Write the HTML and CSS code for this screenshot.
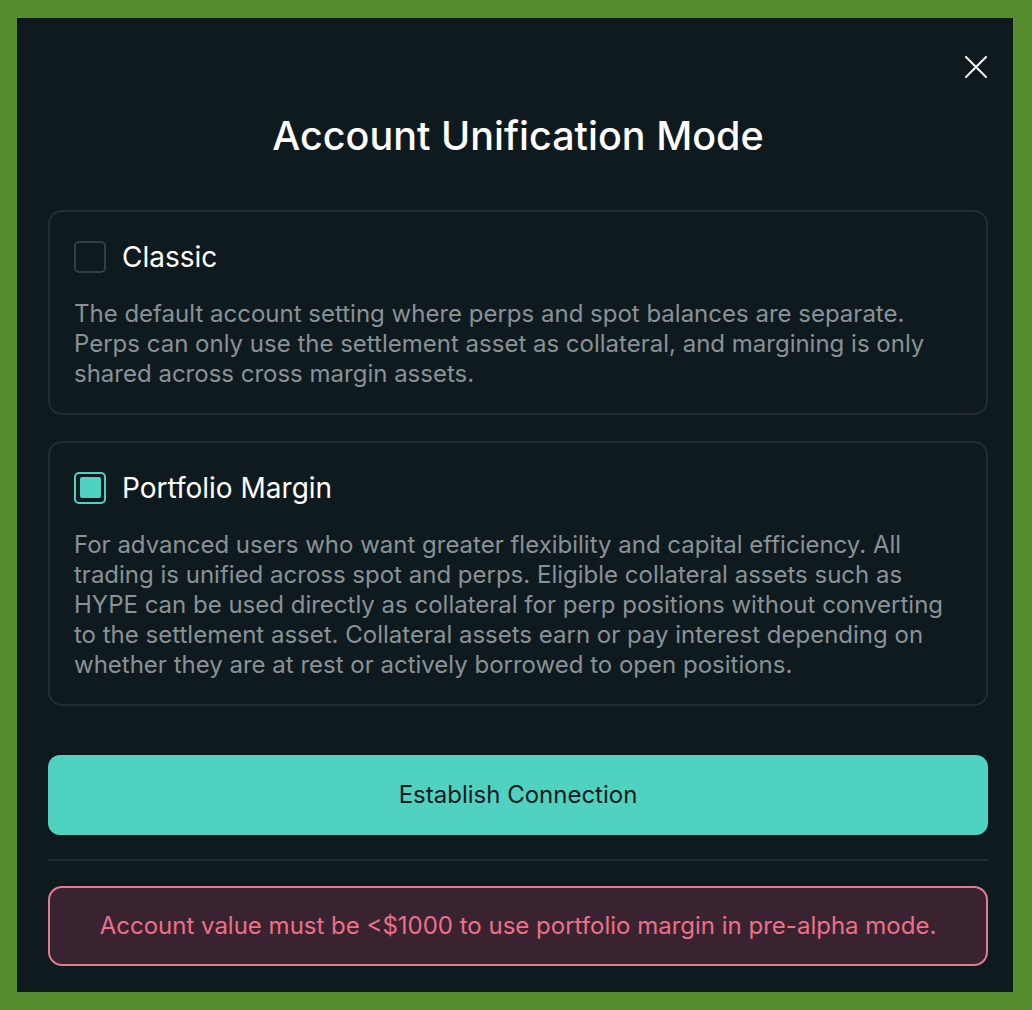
FILE: index.html
```html
<!DOCTYPE html>
<html lang="en">
<head>
    <meta charset="UTF-8">
    <meta name="viewport" content="width=device-width, initial-scale=1.0">
    <title>Account Unification Mode</title>
    <link rel="stylesheet" href="styles.css">
</head>
<body>

    <!-- Modal -->
    <div class="modal">
        <button class="close-btn" aria-label="Close">
            <svg width="22" height="22" viewBox="0 0 22 22">
                <path d="M1 1 L21 21 M21 1 L1 21" stroke="#fff" stroke-width="2" stroke-linecap="round"/>
            </svg>
        </button>

        <h2 class="modal-title">Account Unification Mode</h2>

        <div class="option-card">
            <div class="option-head">
                <span class="checkbox"></span>
                <span class="option-name">Classic</span>
            </div>
            <p class="option-desc">The default account setting where perps and spot balances are separate. Perps can only use the settlement asset as collateral, and margining is only shared across cross margin assets.</p>
        </div>

        <div class="option-card">
            <div class="option-head">
                <span class="checkbox checked"></span>
                <span class="option-name">Portfolio Margin</span>
            </div>
            <p class="option-desc">For advanced users who want greater flexibility and capital efficiency. All trading is unified across spot and perps. Eligible collateral assets such as HYPE can be used directly as collateral for perp positions without converting to the settlement asset. Collateral assets earn or pay interest depending on whether they are at rest or actively borrowed to open positions.</p>
        </div>

        <button class="primary-btn">Establish Connection</button>

        <hr class="divider">

        <div class="alert">Account value must be &lt;$1000 to use portfolio margin in pre-alpha mode.</div>
    </div>

</body>
</html>
```

FILE: styles.css
```css
/* General Styles */
body {
    margin: 0;
    background-color: #568d2f;
    font-family: 'Inter', 'Noto Sans', sans-serif;
    color: #fff;
}

/* Modal */
.modal {
    position: relative;
    box-sizing: border-box;
    width: 996px;
    height: 974px;
    margin: 18px 0 0 17px;
    padding: 0 25px 26px 31px;
    background-color: #0f1a1f;
    display: flex;
    flex-direction: column;
}

.close-btn {
    position: absolute;
    top: 38px;
    right: 26px;
    background: none;
    border: none;
    padding: 0;
    cursor: pointer;
    line-height: 0;
}

.modal-title {
    margin: 95px 0 51px;
    font-size: 39.5px;
    line-height: 46px;
    font-weight: 500;
    text-align: center;
}

/* Option cards */
.option-card {
    border: 2px solid #232c31;
    border-radius: 14px;
    padding: 29px 25px 24px 24px;
    margin-bottom: 26px;
}

.option-card + .option-card {
    margin-bottom: 0;
}

.option-head {
    display: flex;
    align-items: center;
    gap: 16px;
    height: 31px;
}

.checkbox {
    box-sizing: border-box;
    width: 32px;
    height: 32px;
    border: 2px solid #353e43;
    border-radius: 5px;
    display: flex;
    align-items: center;
    justify-content: center;
}

.checkbox.checked {
    border-color: #50d2c1;
}

.checkbox.checked::after {
    content: "";
    width: 21px;
    height: 21px;
    background-color: #50d2c1;
    border-radius: 2px;
}

.option-name {
    font-size: 28px;
    font-weight: 400;
}

.option-desc {
    margin: 27px 0 0;
    font-size: 24px;
    line-height: 30px;
    color: #899296;
}

/* Button */
.primary-btn {
    margin-top: 49px;
    height: 80px;
    border: none;
    border-radius: 12px;
    background-color: #50d2c1;
    color: #0f1a1f;
    font-family: inherit;
    font-size: 24px;
    cursor: pointer;
}

.divider {
    margin: 24px 0 25px;
    border: none;
    border-top: 2px solid #232c31;
}

/* Alert */
.alert {
    box-sizing: border-box;
    height: 81px;
    border: 2px solid #e27d8f;
    border-radius: 14px;
    background-color: #3a2330;
    color: #ec7089;
    font-size: 24px;
    display: flex;
    align-items: center;
    justify-content: center;
}
```
